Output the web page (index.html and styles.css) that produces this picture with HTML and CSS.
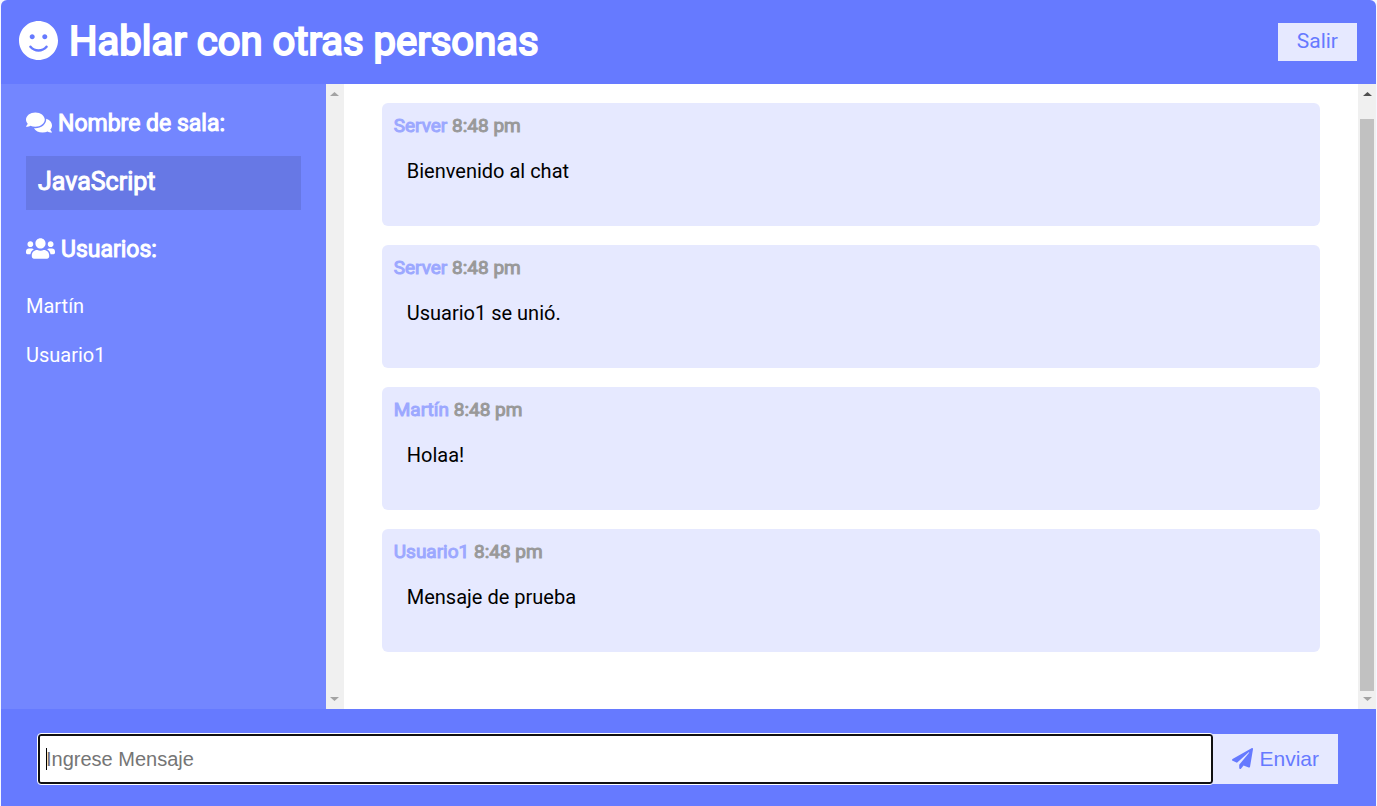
FILE: index.html
```html
<!DOCTYPE html>
<html lang="es">
<head>
<meta charset="utf-8">
<meta name="viewport" content="width=device-width, initial-scale=1">
<title>Hablar con otras personas</title>
<link rel="stylesheet" href="styles.css">
</head>
<body>
<div class="chat">
  <header class="chat-header">
    <h1 class="strong title">
      <svg class="icon-smile" viewBox="0 8 496 496" aria-hidden="true"><path d="M248 8C111 8 0 119 0 256s111 248 248 248 248-111 248-248S385 8 248 8zm80 168c17.7 0 32 14.3 32 32s-14.3 32-32 32-32-14.3-32-32 14.3-32 32-32zm-160 0c17.7 0 32 14.3 32 32s-14.3 32-32 32-32-14.3-32-32 14.3-32 32-32zm194.8 170.2C334.3 380.4 292.5 400 248 400s-86.3-19.6-114.8-53.8c-13.6-16.3 11-36.7 24.6-20.5 22.4 26.9 55.2 42.2 90.2 42.2s67.8-15.4 90.2-42.2c13.4-16.2 38.1 4.2 24.6 20.5z"/></svg>
      Hablar con otras personas
    </h1>
    <a class="leave" href="#">Salir</a>
  </header>
  <main class="chat-main">
    <div class="pane">
      <aside class="sidebar">
        <h3 class="strong side-title">
          <svg class="icon-comments" viewBox="0 32 576 448" aria-hidden="true"><path d="M416 192c0-88.4-93.1-160-208-160S0 103.6 0 192c0 34.3 14.1 65.9 38 92-13.4 30.2-35.5 54.2-35.8 54.5-2.2 2.3-2.8 5.7-1.5 8.7S4.8 352 8 352c36.6 0 66.9-12.3 88.7-25 32.2 15.7 70.3 25 111.3 25 114.9 0 208-71.6 208-160zm122 220c23.9-26 38-57.7 38-92 0-66.9-53.5-124.2-129.3-148.1.9 6.6 1.3 13.3 1.3 20.1 0 105.9-107.7 192-240 192-10.8 0-21.3-.8-31.7-1.9C207.8 439.6 281.8 480 368 480c41 0 79.1-9.2 111.3-25 21.8 12.7 52.1 25 88.7 25 3.2 0 6.1-1.9 7.3-4.8 1.3-2.9.7-6.3-1.5-8.7-.3-.3-22.4-24.2-35.8-54.5z"/></svg>
          Nombre de sala:
        </h3>
        <h2 class="strong room">JavaScript</h2>
        <h3 class="strong side-title">
          <svg class="icon-users" viewBox="0 32 640 448" aria-hidden="true"><path d="M96 224c35.3 0 64-28.7 64-64s-28.7-64-64-64-64 28.7-64 64 28.7 64 64 64zm448 0c35.3 0 64-28.7 64-64s-28.7-64-64-64-64 28.7-64 64 28.7 64 64 64zm32 32h-64c-17.6 0-33.5 7.1-45.1 18.6 40.3 22.1 68.9 62 75.1 109.4h66c17.7 0 32-14.3 32-32v-32c0-35.3-28.7-64-64-64zm-256 0c61.9 0 112-50.1 112-112S381.9 32 320 32 208 82.1 208 144s50.1 112 112 112zm76.8 32h-8.3c-20.8 10-43.9 16-68.5 16s-47.6-6-68.5-16h-8.3C179.6 288 128 339.6 128 403.2V432c0 26.5 21.5 48 48 48h288c26.5 0 48-21.5 48-48v-28.8c0-63.6-51.6-115.2-115.2-115.2zm-223.7-13.4C161.5 263.1 145.6 256 128 256H64c-35.3 0-64 28.7-64 64v32c0 17.7 14.3 32 32 32h65.9c6.3-47.4 34.9-87.3 75.2-109.4z"/></svg>
          Usuarios:
        </h3>
        <ul class="users">
          <li>Martín</li>
          <li>Usuario1</li>
        </ul>
      </aside>
      <div class="scrollbar" aria-hidden="true">
        <svg class="arrow" viewBox="0 0 9 4"><path d="M0 4L4.5 0L9 4z"/></svg>
        <svg class="arrow" viewBox="0 0 9 4"><path d="M0 0L4.5 4L9 0z"/></svg>
      </div>
    </div>
    <div class="pane">
      <section class="messages">
        <article class="message">
          <p class="strong meta">Server <span>8:48 pm</span></p>
          <p class="text">Bienvenido al chat</p>
        </article>
        <article class="message">
          <p class="strong meta">Server <span>8:48 pm</span></p>
          <p class="text">Usuario1 se unió.</p>
        </article>
        <article class="message">
          <p class="strong meta">Martín <span>8:48 pm</span></p>
          <p class="text">Holaa!</p>
        </article>
        <article class="message">
          <p class="strong meta">Usuario1 <span>8:48 pm</span></p>
          <p class="text">Mensaje de prueba</p>
        </article>
      </section>
      <div class="scrollbar" aria-hidden="true">
        <svg class="arrow active" viewBox="0 0 9 4"><path d="M0 4L4.5 0L9 4z"/></svg>
        <div class="thumb"></div>
        <svg class="arrow" viewBox="0 0 9 4"><path d="M0 0L4.5 4L9 0z"/></svg>
      </div>
    </div>
  </main>
  <form class="composer">
    <input class="field" type="text" placeholder="Ingrese Mensaje" aria-label="Ingrese Mensaje" autocomplete="off">
    <button class="send" type="button">
      <svg class="icon-plane" viewBox="0 0 512 512" aria-hidden="true"><path d="M476 3.2L12.5 270.6c-18.1 10.4-15.8 35.6 2.2 43.2L121 358.4l287.3-253.2c5.5-4.9 13.3 2.6 8.6 8.3L176 407v80.5c0 23.6 28.5 32.9 42.5 15.8L282 426l124.6 52.2c14.2 6 30.4-2.9 33-18.2l72-432C515 7.8 493.3-6.8 476 3.2z"/></svg>
      Enviar
    </button>
  </form>
</div>
</body>
</html>
```
FILE: styles.css
```css
* {
  box-sizing: border-box;
  margin: 0;
  padding: 0;
}

body {
  background: #f6f7ff;
  font-family: Roboto, sans-serif;
  font-size: 20px;
}

svg {
  fill: currentColor;
  flex: none;
}

/* Regular face thickened by a stroke, for headings and names */
.strong {
  font-weight: 400;
  -webkit-text-stroke: 1px currentColor;
}

.strong svg {
  stroke: none;
}

.chat {
  display: flex;
  flex-direction: column;
  min-height: 100vh;
  margin: 0 1px;
}

.chat-header {
  display: flex;
  align-items: center;
  justify-content: space-between;
  padding: 18px 19px 18px 18px;
  border-radius: 6px 6px 0 0;
  background: #667aff;
  color: #fff;
}

.title {
  display: flex;
  align-items: center;
  gap: 11px;
  font-size: 40px;
  line-height: 48px;
  -webkit-text-stroke-width: 2px;
}

.icon-smile {
  width: 39px;
  height: 39px;
  margin-bottom: 4px;
}

.leave {
  padding: 4px 19px 6px;
  background: #e6e9ff;
  color: #667aff;
  font-size: 21px;
  line-height: 28px;
  text-decoration: none;
}

.chat-main {
  display: grid;
  grid-template-columns: calc(25% - 1px) 1fr;
  flex: 1;
}

.pane {
  display: flex;
  background: #fff;
}

.sidebar {
  flex: 1;
  padding: 25px;
  background: #7386ff;
  color: #fff;
}

.side-title {
  display: flex;
  align-items: center;
  gap: 6px;
  font-size: 23px;
  line-height: 30px;
}

.icon-comments,
.icon-users {
  height: 21px;
  margin-bottom: 3px;
}

.icon-comments {
  width: 26px;
}

.icon-users {
  width: 29px;
}

.room {
  margin: 17px 0 25px;
  padding: 12px 12px 14px;
  background: #6778e5;
  font-size: 25px;
  line-height: 28px;
}

.users {
  display: grid;
  gap: 25px;
  margin-top: 29px;
  line-height: 24px;
  list-style: none;
}

.scrollbar {
  display: flex;
  flex: none;
  flex-direction: column;
  align-items: center;
  justify-content: space-between;
  width: 18px;
  padding: 8px 2px;
  background: #f0f0f0;
  color: #a3a3a3;
}

.arrow {
  width: 9px;
  height: 4px;
}

.arrow.active {
  color: #505050;
}

.thumb {
  flex: 1;
  width: 14px;
  margin: 23px 0 6px;
  background: #c1c1c1;
}

.messages {
  display: grid;
  flex: 1;
  align-content: start;
  gap: 19px;
  padding: 19px 38px;
}

.message {
  padding: 12px 12px 39px;
  border-radius: 6px;
  background: #e6e9ff;
}

.meta {
  color: #9ca8ff;
  font-size: 19px;
  line-height: 22px;
}

.meta span {
  color: #999;
}

.text {
  margin-top: 18px;
  padding: 0 13px;
  line-height: 32px;
}

.composer {
  display: flex;
  padding: 25px 38px 22px 37px;
  background: #667aff;
}

.field {
  flex: 1;
  min-width: 0;
  padding: 0 6px;
  border: 2px solid #101010;
  border-radius: 3px;
  outline: 1px solid #fff;
  background: #fff;
  font: 20px "Liberation Sans", Arial, sans-serif;
}

.field::placeholder {
  color: #757575;
}

/* Steady caret at the start of the empty field */
.field:placeholder-shown {
  background: linear-gradient(#000, #000) 6px center / 1px 22px no-repeat #fff;
  caret-color: transparent;
}

.send {
  display: flex;
  align-items: center;
  gap: 6px;
  height: 50px;
  padding: 0 19px;
  border: 0;
  background: #e6e9ff;
  color: #667aff;
  font: 21px "Liberation Sans", Arial, sans-serif;
}

.icon-plane {
  width: 21px;
  height: 21px;
  margin-bottom: 2px;
}
```
